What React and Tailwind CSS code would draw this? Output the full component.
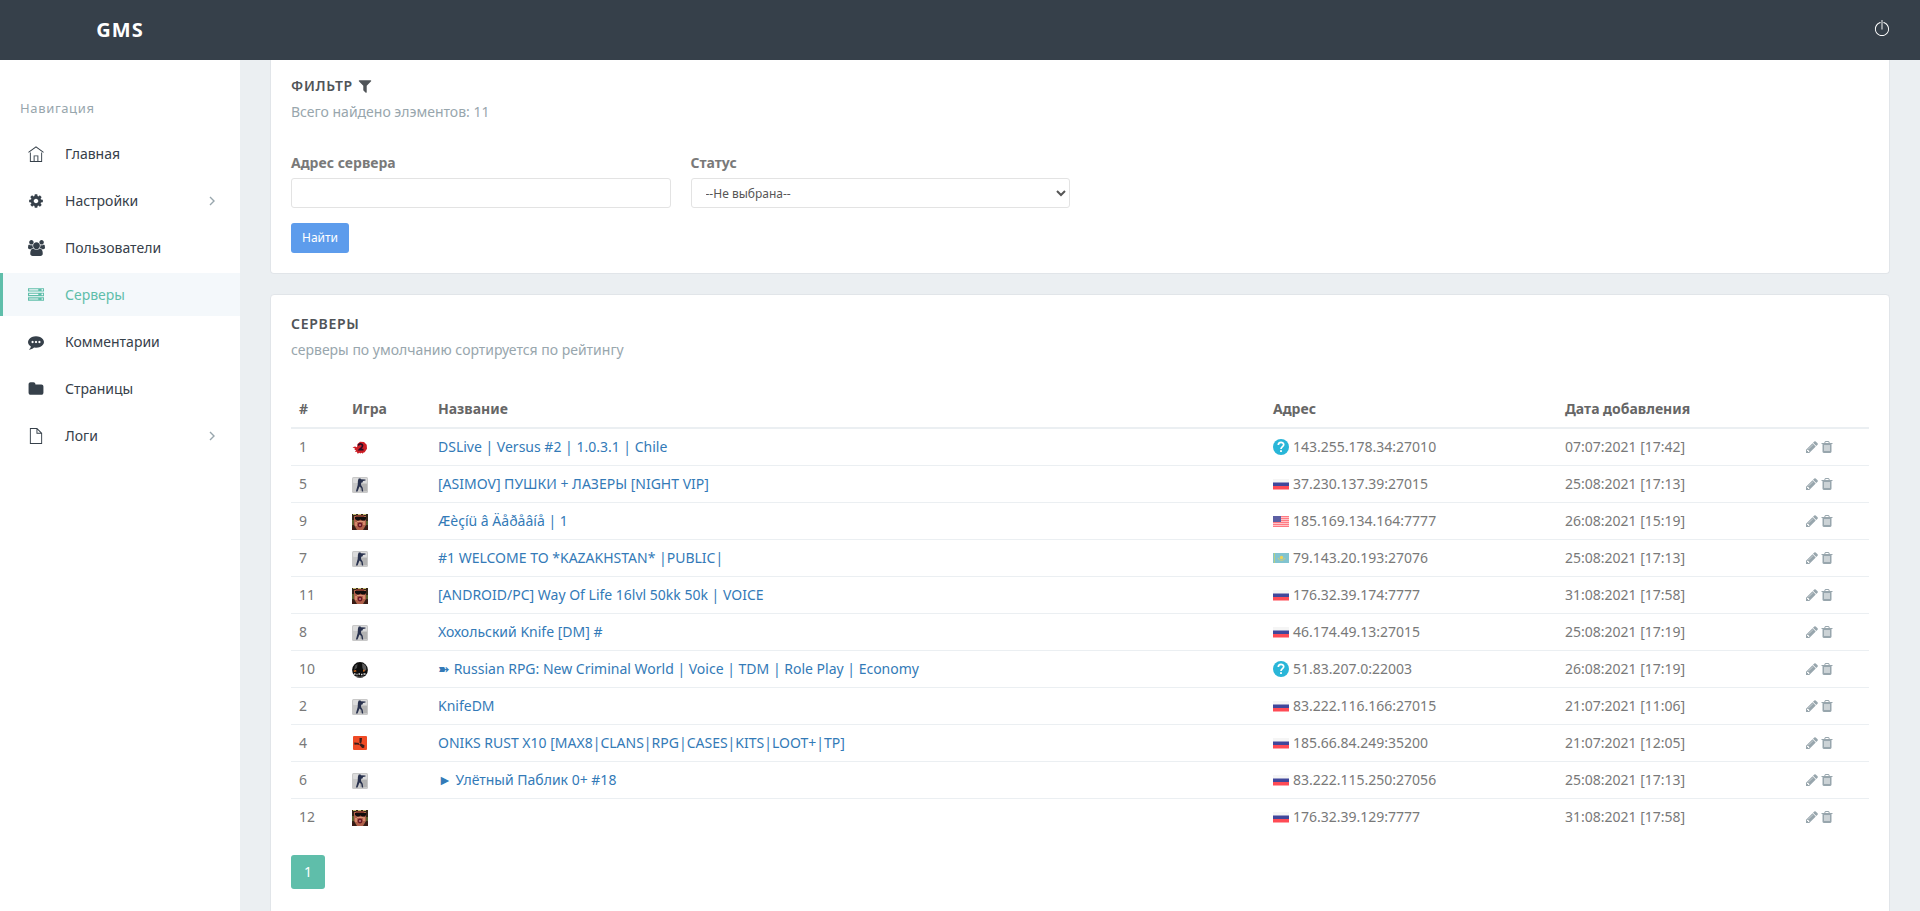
import { useState } from "react";
import { TfiHome, TfiFile, TfiPowerOff } from "react-icons/tfi";

const paths = {
  cog: "M1152 896q0-106-75-181t-181-75-181 75-75 181 75 181 181 75 181-75 75-181zm512-109v222q0 12-8 23t-20 13l-185 28q-19 54-39 91 35 50 107 138 10 12 10 25t-9 23q-27 37-99 108t-94 71q-12 0-26-9l-138-108q-44 23-91 38-16 136-29 186-7 28-36 28h-222q-14 0-24.5-8.5t-11.5-21.5l-28-184q-49-16-90-37l-141 107q-10 9-25 9-14 0-25-11-126-114-165-168-7-10-7-23 0-12 8-23 15-21 51-66.5t54-70.5q-27-50-41-99l-183-27q-13-2-21-12.5t-8-23.5v-222q0-12 8-23t19-13l186-28q14-46 39-92-40-57-107-138-10-12-10-24 0-10 9-23 26-36 98.5-107.5t94.5-71.5q13 0 26 10l138 107q44-23 91-38 16-136 29-186 7-28 36-28h222q14 0 24.5 8.500t11.500 21.500l28 184q49 16 90 37l142-107q9-9 24-9 13 0 25 10 129 119 165 170 7 8 7 22 0 12-8 23-15 21-51 66.500t-54 70.500q26 50 41 98l183 28q13 2 21 12.500t8 23.500z",
  filter:
    "M1595 295q17 41-14 70l-493 493v742q0 42-39 59-13 5-25 5-27 0-45-19l-256-256q-19-19-19-45v-486l-493-493q-31-29-14-70 17-39 59-39h1280q42 0 59 39z",
  server:
    "M128 1408h1024v-128h-1024v128zm0-512h1024v-128h-1024v128zm1568 448q0-40-28-68t-68-28-68 28-28 68 28 68 68 28 68-28 28-68zm-1568-960h1024v-128h-1024v128zm1568 448q0-40-28-68t-68-28-68 28-28 68 28 68 68 28 68-28 28-68zm0-512q0-40-28-68t-68-28-68 28-28 68 28 68 68 28 68-28 28-68zm96 832v384h-1792v-384h1792zm0-512v384h-1792v-384h1792zm0-512v384h-1792v-384h1792z",
  comment:
    "M640 896q0-53-37.5-90.5t-90.5-37.5-90.5 37.5-37.5 90.5 37.5 90.5 90.5 37.5 90.5-37.5 37.5-90.5zm384 0q0-53-37.5-90.5t-90.5-37.5-90.5 37.5-37.5 90.5 37.5 90.5 90.5 37.5 90.5-37.5 37.5-90.5zm384 0q0-53-37.5-90.5t-90.5-37.5-90.5 37.5-37.5 90.5 37.5 90.5 90.5 37.5 90.5-37.5 37.5-90.5zm384 0q0 174-120 321.5t-326 233-450 85.5q-110 0-211-18-173 173-435 229-52 10-86 13-12 1-22-6t-13-18q-4-15 20-37 5-5 23.5-21.5t25.5-23.5 23.5-25.5 24-31.5 20.5-37 20-48 14.5-57.5 12.5-72.5q-146-90-229.5-216.5t-83.5-269.5q0-174 120-321.5t326-233 450-85.5 450 85.5 326 233 120 321.5z",
  folder:
    "M1728 608v704q0 92-66 158t-158 66h-1216q-92 0-158-66t-66-158v-960q0-92 66-158t158-66h320q92 0 158 66t66 158v32h672q92 0 158 66t66 158z",
  users:
    "M593 896q-162 5-265 128h-134q-82 0-138-40.5t-56-118.5q0-353 124-353 6 0 43.5 21t97.5 42.5 119 21.5q67 0 133-23-5 37-5 66 0 139 81 256zm1071 637q0 120-73 189.5t-194 69.5h-874q-121 0-194-69.5t-73-189.5q0-53 3.5-103.5t14-109 26.5-108.5 43-97.5 62-81 85.5-53.5 111.5-20q10 0 43 21.5t73 48 107 48 135 21.5 135-21.5 107-48 73-48 43-21.5q61 0 111.5 20t85.5 53.5 62 81 43 97.5 26.5 108.5 14 109 3.5 103.5zm-1024-1277q0 106-75 181t-181 75-181-75-75-181 75-181 181-75 181 75 75 181zm704 384q0 159-112.5 271.5t-271.5 112.5-271.5-112.5-112.5-271.5 112.5-271.5 271.5-112.5 271.5 112.5 112.5 271.5zm576 225q0 78-56 118.5t-138 40.5h-134q-103-123-265-128 81-117 81-256 0-29-5-66 66 23 133 23 59 0 119-21.5t97.5-42.5 43.5-21q124 0 124 353zm-128-609q0 106-75 181t-181 75-181-75-75-181 75-181 181-75 181 75 75 181z",
  pencil:
    "M491 1536l91-91-235-235-91 91v107h128v128h107zm523-928q0-22-22-22-10 0-17 7l-542 542q-7 7-7 17 0 22 22 22 10 0 17-7l542-542q7-7 7-17zm-54-192l416 416-832 832h-416v-416zm683 96q0 53-37 90l-166 166-416-416 166-165q36-38 90-38 53 0 91 38l235 234q37 39 37 91z",
  trash:
    "M704 1376v-704q0-14-9-23t-23-9h-64q-14 0-23 9t-9 23v704q0 14 9 23t23 9h64q14 0 23-9t9-23zm256 0v-704q0-14-9-23t-23-9h-64q-14 0-23 9t-9 23v704q0 14 9 23t23 9h64q14 0 23-9t9-23zm256 0v-704q0-14-9-23t-23-9h-64q-14 0-23 9t-9 23v704q0 14 9 23t23 9h64q14 0 23-9t9-23zm-544-992h448l-48-117q-7-9-17-11h-317q-10 2-17 11zm928 32v64q0 14-9 23t-23 9h-96v948q0 83-47 143.5t-113 60.5h-832q-66 0-113-58.5t-47-141.5v-952h-96q-14 0-23-9t-9-23v-64q0-14 9-23t23-9h309l70-167q15-37 54-63t79-26h320q40 0 79 26t54 63l70 167h309q14 0 23 9t9 23z",
};

function Icon({ name, className }) {
  return (
    <svg
      viewBox={name === "users" ? "0 0 1920 1792" : "0 0 1792 1792"}
      fill="currentColor"
      className={className}
      aria-hidden="true"
    >
      <path d={paths[name]} />
    </svg>
  );
}

function GameIcon({ game }) {
  return (
    <svg viewBox="0 0 16 16" className="block size-4" aria-hidden="true">
      {game === "l4d2" && (
        <>
          <path d="M5.500 4L8 1.800l4 .2 2.700 2.800.3 4-2.300 3.500-1.500.5-.5 1-1-1-1.500.8-.8-.8-1.700 1-1-2L3 12l1-2H2.500l.5-1.500L.5 7.500 3 6.500l2 .8z" fill="#cc1f26" />
          <path d="M6.200 5.500C7.500 3.200 10.800 3.600 10.500 6c-.2 1.500-2 2.500-3 3.600h4" fill="none" stroke="#2a0b25" strokeWidth="1.700" />
        </>
      )}
      {game === "cs" && (
        <>
          <rect width="16" height="16" rx="1.500" fill="#c8c8c8" />
          <rect x="1" y="1" width="14" height="5" rx="1" fill="#dcdcdc" />
          <rect x="8" y="7" width="7" height="7" fill="#b2b2b2" />
          <path d="M6.500 1.800l1.700-.5.8 1 4.500.2v1L11 4l-.5 1.500-1.300.2-.2 2.300 1.700 2.800.5 3.700H9.900L9.300 11 7.500 9.500 5.500 14.500H3.900L5.700 8l.2-4z" fill="#28314d" />
        </>
      )}
      {game === "samp" && (
        <>
          <rect width="16" height="16" fill="#33261a" />
          <path d="M2 2h12v9l-3 5H5l-3-5z" fill="#b0604a" />
          <path d="M1 0h3v1H1zM6 0h3v1H6zM11 0h3v1h-3z" fill="#c8bd72" />
          <path d="M4 1h8v2H4z" fill="#7f3a2b" />
          <path d="M3 3h11v2l-1 1.500h-3L8.500 5.500 7 6.500H5L3 5z" fill="#120d0d" />
          <path d="M5 7h6v1H5z" fill="#dc9478" />
          <circle cx="8" cy="11" r="2.400" fill="#6b1724" />
          <circle cx="8" cy="11" r="1" fill="#c27f83" />
          <path d="M3 8h2v4H3zM11 7h2v4h-2z" fill="#d58a6c" />
          <path d="M0 6h2v5H0zM14 7h2v4h-2z" fill="#59602f" />
          <path d="M0 12l3 2 1 2H0zM13 13l3-1v4h-3z" fill="#3a1914" />
        </>
      )}
      {game === "mta" && (
        <>
          <circle cx="8" cy="8" r="7.900" fill="#0d0d0d" />
          <path d="M10 1.500c3.500.8 4.500 3 4.300 6.500L12 9.500 10.500 6z" fill="#5c5c5c" />
          <path d="M3 3.500L5.500 2 5 6 2 8z" fill="#4a4a4a" />
          <path d="M1.500 8.500L4 8l.5 1.500L2 10zM11 8l2-.5-.5 2-1.500.3z" fill="#c4641c" />
          <path d="M2 12h1.500M4.500 12.500h1M6.500 12h1.500M9 12.500h1.500M11.500 12h2" stroke="#d9d9d9" strokeWidth="1.500" />
          <path d="M4 14.500c3 1 6 1 8-.5" stroke="#777" fill="none" />
        </>
      )}
      {game === "rust" && (
        <>
          <rect x="1" y="0" width="14" height="14" rx="1" fill="#ef4a25" />
          <path d="M7.500 2h2.500l-.3 3.500L9 7.500l3.500 1.800-.3 2.500-2 .2L7.500 9 5 8.500l-2.500.2L2.200 6.500l2.800.2L7.500 7z" fill="#3a1d1c" />
          <circle cx="7.700" cy="7.600" r=".9" fill="#ef4a25" />
        </>
      )}
    </svg>
  );
}

function Flag({ country }) {
  return (
    <svg
      viewBox="0 0 16 16"
      className="inline-block size-4 shrink-0"
      aria-hidden="true"
    >
      {country === "unknown" && (
        <>
          <circle cx="8" cy="8" r="8" fill="#29b6d8" />
          <path d="M5.300 6c0-3.300 5.400-3.400 5.400-.3C10.700 7.600 8 7.700 8 10" fill="none" stroke="#fff" strokeWidth="1.700" />
          <rect x="7.100" y="11.200" width="1.800" height="1.800" fill="#fff" />
        </>
      )}
      {country === "ru" && (
        <>
          <rect y="3" width="16" height="4" fill="#f5f5f5" />
          <rect y="6.500" width="16" height="4" fill="#41479b" />
          <rect y="10" width="16" height="3.500" fill="#ff4b55" />
        </>
      )}
      {country === "us" && (
        <>
          <rect y="3" width="16" height="11" fill="#ffc4c8" />
          <path d="M0 3.500h16M0 5.500h16M0 7.500h16M0 9.500h16M0 11.500h16M0 13.500h16" stroke="#ff7a82" />
          <rect y="3" width="8" height="6" fill="#5c5fa3" />
        </>
      )}
      {country === "kz" && (
        <>
          <rect y="3" width="16" height="10" fill="#82c4d0" />
          <path d="M1.500 3v10" stroke="#b6cf86" />
          <circle cx="8.500" cy="7.500" r="1.700" fill="#efd358" />
          <path d="M5 8c1 3 6 3 7 0" fill="none" stroke="#d5cf70" />
        </>
      )}
    </svg>
  );
}

function Chevron() {
  return (
    <svg
      viewBox="0 0 8 10"
      className="h-[10px] w-2 text-[#98a6ad]"
      fill="none"
      stroke="currentColor"
      strokeWidth="1.4"
      aria-hidden="true"
    >
      <path d="M2 1l4 4-4 4" />
    </svg>
  );
}

const navItems = [
  { label: "Главная", icon: <TfiHome className="size-4" /> },
  {
    label: "Настройки",
    icon: <Icon name="cog" className="size-4" />,
    sub: true,
  },
  { label: "Пользователи", icon: <Icon name="users" className="h-4 w-[17px]" /> },
  {
    label: "Серверы",
    icon: <Icon name="server" className="size-4" />,
    active: true,
  },
  { label: "Комментарии", icon: <Icon name="comment" className="size-4" /> },
  { label: "Страницы", icon: <Icon name="folder" className="size-4" /> },
  { label: "Логи", icon: <TfiFile className="size-4" />, sub: true },
];

const servers = [
  { id: 1, game: "l4d2", name: "DSLive | Versus #2 | 1.0.3.1 | Chile", country: "unknown", address: "143.255.178.34:27010", date: "07:07:2021 [17:42]" },
  { id: 5, game: "cs", name: "[ASIMOV] ПУШКИ + ЛАЗЕРЫ [NIGHT VIP]", country: "ru", address: "37.230.137.39:27015", date: "25:08:2021 [17:13]" },
  { id: 9, game: "samp", name: "Æèçíü â Äåðåâíå | 1", country: "us", address: "185.169.134.164:7777", date: "26:08:2021 [15:19]" },
  { id: 7, game: "cs", name: "#1 WELCOME TO *KAZAKHSTAN* |PUBLIC|", country: "kz", address: "79.143.20.193:27076", date: "25:08:2021 [17:13]" },
  { id: 11, game: "samp", name: "[ANDROID/PC] Way Of Life 16lvl 50kk 50k | VOICE", country: "ru", address: "176.32.39.174:7777", date: "31:08:2021 [17:58]" },
  { id: 8, game: "cs", name: "Хохольский Knife [DM] #", country: "ru", address: "46.174.49.13:27015", date: "25:08:2021 [17:19]" },
  { id: 10, game: "mta", name: "➽ Russian RPG: New Criminal World | Voice | TDM | Role Play | Economy", country: "unknown", address: "51.83.207.0:22003", date: "26:08:2021 [17:19]" },
  { id: 2, game: "cs", name: "KnifeDM", country: "ru", address: "83.222.116.166:27015", date: "21:07:2021 [11:06]" },
  { id: 4, game: "rust", name: "ONIKS RUST X10 [MAX8|CLANS|RPG|CASES|KITS|LOOT+|TP]", country: "ru", address: "185.66.84.249:35200", date: "21:07:2021 [12:05]" },
  { id: 6, game: "cs", name: "► Улётный Паблик 0+ #18", country: "ru", address: "83.222.115.250:27056", date: "25:08:2021 [17:13]" },
  { id: 12, game: "samp", name: "", country: "ru", address: "176.32.39.129:7777", date: "31:08:2021 [17:58]" },
];

export default function App() {
  const [address, setAddress] = useState("");
  const [status, setStatus] = useState("");

  return (
    <div className="flex h-screen flex-col overflow-hidden bg-[#ebeff2] font-['Noto_Sans',sans-serif] text-sm text-[#797979]">
      {/* Шапка */}
      <header className="flex h-[60px] shrink-0 items-center justify-between bg-[#36404a] pr-[30px]">
        <a
          href="#"
          className="w-60 text-center text-xl font-bold tracking-wider text-white"
        >
          GMS
        </a>
        <button type="button" aria-label="Выход" className="pb-1 text-white">
          <TfiPowerOff className="size-4" />
        </button>
      </header>

      <div className="flex min-h-0 flex-1">
        {/* Меню */}
        <aside className="w-60 shrink-0 bg-white pt-[38px]">
          <div className="px-5 text-[13px] leading-5 tracking-wider text-[#98a6ad]">
            Навигация
          </div>
          <nav className="mt-[14px] flex flex-col gap-1">
            {navItems.map((item) => (
              <a
                key={item.label}
                href="#"
                className={`flex h-[43px] items-center border-l-3 pr-6 pl-[22px] ${
                  item.active
                    ? "border-[#5fbeaa] bg-[#f4f8fb] text-[#5fbeaa]"
                    : "border-transparent text-[#36404a]"
                }`}
              >
                <span className="flex w-[22px] justify-center">{item.icon}</span>
                <span className="ml-[18px] flex-1">{item.label}</span>
                {item.sub && <Chevron />}
              </a>
            ))}
          </nav>
        </aside>

        <main className="min-w-0 flex-1 overflow-y-auto px-[30px] [scrollbar-width:none]">
          {/* Фильтр */}
          <section className="mb-5 rounded-b border border-t-0 border-[#e1e5e9] bg-white px-5 pt-[17px] pb-5">
            <h4 className="mb-[7px] flex items-center gap-1 font-semibold leading-[18px] tracking-wider text-[#505458] uppercase">
              Фильтр
              <Icon name="filter" className="size-4" />
            </h4>
            <p className="mb-[31px] text-[#98a6ad]">
              Всего найдено элэментов: 11
            </p>
            <form onSubmit={(e) => e.preventDefault()}>
              <div className="mb-[15px] grid grid-cols-4 gap-5">
                <div>
                  <label
                    htmlFor="address"
                    className="mb-[5px] block font-bold"
                  >
                    Адрес сервера
                  </label>
                  <input
                    id="address"
                    type="text"
                    value={address}
                    onChange={(e) => setAddress(e.target.value)}
                    className="block h-[30px] w-full rounded-[3px] border border-[#e3e3e3] px-[10px] text-xs text-[#565656] outline-none"
                  />
                </div>
                <div>
                  <label htmlFor="status" className="mb-[5px] block font-bold">
                    Статус
                  </label>
                  <select
                    id="status"
                    value={status}
                    onChange={(e) => setStatus(e.target.value)}
                    className="block h-[30px] w-full rounded-[3px] border border-[#e3e3e3] bg-white pl-[10px] text-xs text-[#565656] outline-none"
                  >
                    <option value="">--Не выбрана--</option>
                  </select>
                </div>
              </div>
              <button
                type="submit"
                className="block h-[30px] rounded-[3px] bg-[#5d9cec] px-[11px] text-xs text-white"
              >
                Найти
              </button>
            </form>
          </section>

          {/* Таблица серверов */}
          <section className="mb-5 rounded border border-[#e1e5e9] bg-white p-5">
            <h4 className="mb-[7px] font-semibold leading-[18px] tracking-wider text-[#505458] uppercase">
              Серверы
            </h4>
            <p className="mb-[31px] text-[#98a6ad]">
              серверы по умолчанию сортируется по рейтингу
            </p>
            <table className="w-full table-fixed text-left">
              <thead>
                <tr className="border-b-2 border-[#ebeff2] text-[#666]">
                  <th className="w-[53px] p-2">#</th>
                  <th className="w-[86px] p-2">Игра</th>
                  <th className="p-2">Название</th>
                  <th className="w-[292px] p-2">Адрес</th>
                  <th className="w-[240px] p-2">Дата добавления</th>
                  <th className="w-[72px] p-2" aria-label="Действия"></th>
                </tr>
              </thead>
              <tbody>
                {servers.map((s) => (
                  <tr
                    key={s.id}
                    className="border-b border-[#ebeff2] last:border-b-0"
                  >
                    <td className="p-2">{s.id}</td>
                    <td className="px-2 pt-[2px]">
                      <GameIcon game={s.game} />
                    </td>
                    <td className="p-2">
                      <a href="#" className="text-[#337ab7]">
                        {s.name}
                      </a>
                    </td>
                    <td className="p-2">
                      <div className="flex items-center gap-1">
                        <Flag country={s.country} />
                        {s.address}
                      </div>
                    </td>
                    <td className="p-2">{s.date}</td>
                    <td className="p-2">
                      <div className="flex items-center gap-px text-[#98a6ad]">
                        <button type="button" aria-label="Редактировать">
                          <Icon name="pencil" className="size-[14px]" />
                        </button>
                        <button type="button" aria-label="Удалить">
                          <Icon name="trash" className="size-[14px]" />
                        </button>
                      </div>
                    </td>
                  </tr>
                ))}
              </tbody>
            </table>
            <div className="my-5 flex">
              <a
                href="#"
                className="flex size-[34px] items-center justify-center rounded-[3px] bg-[#5fbeaa] text-white"
              >
                1
              </a>
            </div>
          </section>
        </main>
      </div>
    </div>
  );
}
